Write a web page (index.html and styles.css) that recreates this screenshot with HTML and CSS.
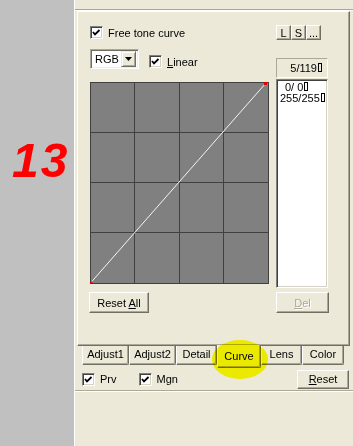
FILE: index.html
```html
<!DOCTYPE html>
<html lang="en">
<head>
  <meta charset="UTF-8">
  <title>Free tone curve</title>
  <link rel="stylesheet" href="styles.css">
</head>
<body>

  <div class="app">
    <div class="side"><span class="num">13</span></div>

    <div class="main">
      <div class="etch"></div>

      <div class="tabpage">
        <div class="cols">
          <div class="left">
            <label class="check"><span class="box"><svg width="11" height="11"><polyline points="2,5 4,7.5 8.5,3" /></svg></span><span>Free tone curve</span></label>

            <div class="row2">
              <div class="combo">
                <span class="combo-val">RGB</span>
                <span class="combo-btn"><svg width="7" height="4"><polygon points="0,0 7,0 3.5,4" /></svg></span>
              </div>
              <label class="check linear"><span class="box"><svg width="11" height="11"><polyline points="2,5 4,7.5 8.5,3" /></svg></span><span><u>L</u>inear</span></label>
            </div>

            <div class="graph">
              <svg width="179" height="202">
                <rect x="0" y="0" width="179" height="202" fill="#808080" />
                <g class="grid">
                  <line x1="44.5" y1="0" x2="44.5" y2="202" />
                  <line x1="89.5" y1="0" x2="89.5" y2="202" />
                  <line x1="133.5" y1="0" x2="133.5" y2="202" />
                  <line x1="0" y1="50.5" x2="179" y2="50.5" />
                  <line x1="0" y1="100.5" x2="179" y2="100.5" />
                  <line x1="0" y1="150.5" x2="179" y2="150.5" />
                  <rect x="0.5" y="0.5" width="178" height="201" fill="none" />
                </g>
                <line class="curve" x1="0.5" y1="201" x2="175.5" y2="1.5" />
                <rect class="pt" x="-0.5" y="199.5" width="3" height="3" />
                <rect class="pt" x="174" y="0" width="3" height="3" />
              </svg>
            </div>

            <button class="btn reset-all">Reset <u>A</u>ll</button>
          </div>

          <div class="right">
            <div class="mini">
              <button class="btn">L</button>
              <button class="btn">S</button>
              <button class="btn">...</button>
            </div>
            <div class="count">5/119<i class="gl"></i></div>
            <div class="list">
              <div class="first">0/ 0<i class="gl"></i></div>
              <div>255/255<i class="gl"></i></div>
            </div>
            <button class="btn del" disabled><u>D</u>el</button>
          </div>
        </div>
      </div>

      <div class="tabs">
        <div class="tab w47">Adjust1</div>
        <div class="tab w47">Adjust2</div>
        <div class="tab w41">Detail</div>
        <div class="tab sel">Curve</div>
        <div class="tab w41">Lens</div>
        <div class="tab w42">Color</div>
      </div>

      <div class="opts">
        <label class="check"><span class="box"><svg width="11" height="11"><polyline points="2,5 4,7.5 8.5,3" /></svg></span><span>Prv</span></label>
        <label class="check mgn"><span class="box"><svg width="11" height="11"><polyline points="2,5 4,7.5 8.5,3" /></svg></span><span>Mgn</span></label>
        <button class="btn reset"><u>R</u>eset</button>
      </div>

      <div class="sep"></div>
    </div>
  </div>

  <div class="marker"></div>

</body>
</html>
```

FILE: styles.css
```css
body {
  margin: 0;
  width: 353px;
  height: 446px;
  overflow: hidden;
  background: #ece9d8;
  font-family: 'Liberation Sans', Arial, sans-serif;
  font-size: 11px;
  color: #000;
}

u {
  text-decoration: underline;
}

.app {
  display: flex;
  height: 446px;
}

.side {
  width: 74px;
  flex: none;
  background: #c0c0c0;
  box-sizing: border-box;
  padding: 137px 0 0 12px;
}

.num {
  font-size: 48px;
  line-height: 48px;
  font-weight: bold;
  font-style: italic;
  color: #ff0000;
  letter-spacing: 2px;
}

.main {
  flex: 1;
  border-left: 1px solid #fff;
}

.etch {
  margin-top: 9px;
  border-top: 1px solid #aca899;
  border-bottom: 1px solid #fff;
}

.tabpage {
  margin: 0 3px 0 2px;
  height: 335px;
  box-sizing: border-box;
  border: 1px solid;
  border-color: #fff #716f64 #716f64 #fff;
  box-shadow: inset -1px -1px 0 #aca899;
  padding: 13px 0 0 12px;
}

.cols {
  display: flex;
  gap: 7px;
}

.left {
  width: 179px;
  display: flex;
  flex-direction: column;
  align-items: flex-start;
}

.right {
  width: 52px;
  display: flex;
  flex-direction: column;
}

/* checkbox */
.check {
  display: flex;
  align-items: center;
  gap: 5px;
  height: 15px;
  white-space: nowrap;
}

.box {
  width: 13px;
  height: 13px;
  box-sizing: border-box;
  background: #fff;
  border: 1px solid;
  border-color: #808080 #fff #fff #808080;
  box-shadow: inset 1px 1px 0 #404040, inset -1px -1px 0 #d4d0c8;
  flex: none;
}

.box svg {
  display: block;
}

.box polyline {
  fill: none;
  stroke: #000;
  stroke-width: 1.8;
}

.row2 {
  display: flex;
  margin-top: 9px;
  height: 20px;
}

.combo {
  width: 49px;
  height: 20px;
  box-sizing: border-box;
  background: #fff;
  border: 1px solid;
  border-color: #aca899 #fff #fff #aca899;
  box-shadow: inset 1px 1px 0 #716f64, inset -1px -1px 0 #f1efe2;
  display: flex;
  align-items: center;
  padding: 2px 2px 2px 4px;
}

.combo-val {
  flex: 1;
}

.combo-btn {
  width: 15px;
  height: 16px;
  box-sizing: border-box;
  background: #ece9d8;
  border: 1px solid;
  border-color: #ece9d8 #716f64 #716f64 #ece9d8;
  box-shadow: inset 1px 1px 0 #fff, inset -1px -1px 0 #aca899;
  display: flex;
  align-items: center;
  justify-content: center;
}

.combo-btn svg {
  display: block;
}

.linear {
  margin: 5px 0 0 10px;
}

.graph {
  margin-top: 13px;
  width: 179px;
  height: 202px;
}

.graph svg {
  display: block;
}

.grid line,
.grid rect {
  stroke: #404040;
  stroke-width: 1;
  shape-rendering: crispEdges;
}

.curve {
  stroke: #f4f4f4;
  stroke-width: 1;
}

.pt {
  fill: #e00000;
}

/* buttons */
.btn {
  font-family: inherit;
  font-size: 11px;
  color: #000;
  background: #ece9d8;
  border: 1px solid;
  border-color: #fff #716f64 #716f64 #fff;
  box-shadow: inset -1px -1px 0 #aca899;
  padding: 0;
  margin: 0;
  border-radius: 0;
}

.reset-all {
  margin: 8px 0 0 -1px;
  width: 60px;
  height: 21px;
}

.mini {
  display: flex;
  height: 15px;
}

.mini .btn {
  width: 15px;
  height: 15px;
  line-height: 12px;
}

.count {
  margin-top: 18px;
  height: 20px;
  box-sizing: border-box;
  border: 1px solid;
  border-color: #aca899 #fff #fff #aca899;
  text-align: right;
  padding-right: 5px;
  line-height: 18px;
}

.gl {
  display: inline-block;
  width: 2px;
  height: 7px;
  border: 1px solid #000;
  margin-left: 1px;
}

.list {
  margin-top: 1px;
  height: 209px;
  box-sizing: border-box;
  background: #fff;
  border: 1px solid;
  border-color: #808080 #fff #fff #808080;
  box-shadow: inset 1px 1px 0 #404040, inset -1px -1px 0 #d4d0c8;
  padding: 2px 0 0 3px;
  line-height: 11px;
}

.list .first {
  padding-left: 5px;
}

.del {
  margin-top: 4px;
  height: 21px;
  width: 53px;
  color: #aca899;
  text-shadow: 1px 1px 0 #fff;
}

/* bottom tabs */
.tabs {
  display: flex;
  height: 19px;
  padding-left: 7px;
}

.tab {
  height: 19px;
  box-sizing: border-box;
  border-left: 1px solid #fff;
  border-right: 1px solid #716f64;
  border-bottom: 1px solid #716f64;
  border-bottom-right-radius: 2px;
  box-shadow: inset -1px -1px 0 #aca899;
  text-align: center;
  padding-top: 2px;
}

.w47 { width: 47px; }
.w41 { width: 41px; }
.w42 { width: 42px; }

.tab.sel {
  width: 44px;
  height: 23px;
  margin-top: -1px;
  padding-top: 5px;
  background: #ece9d8;
}

.opts {
  display: flex;
  align-items: center;
  height: 20px;
  margin-top: 4px;
  padding-left: 7px;
}

.mgn {
  margin-left: 22px;
}

.reset {
  margin-left: auto;
  margin-right: 4px;
  width: 52px;
  height: 19px;
}

.sep {
  margin-top: 1px;
  border-top: 1px solid #aca899;
  border-bottom: 1px solid #fff;
}

/* highlighter mark over the selected tab */
.marker {
  position: absolute;
  left: 212px;
  top: 340px;
  width: 56px;
  height: 39px;
  border-radius: 50%;
  background: #ffff00;
  mix-blend-mode: multiply;
}
```
